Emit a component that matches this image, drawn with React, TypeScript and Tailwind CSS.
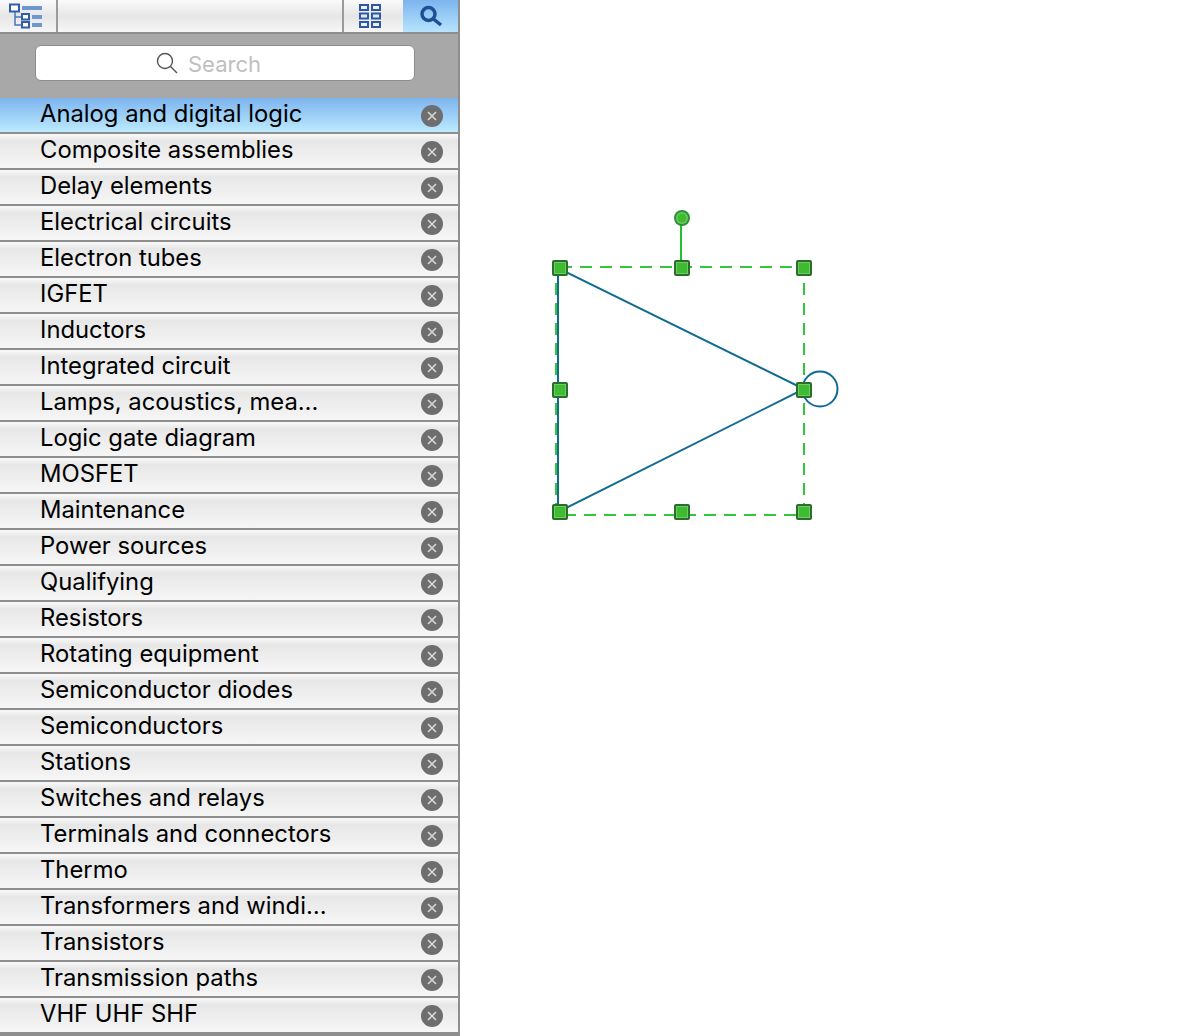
const libraries = [
  "Analog and digital logic",
  "Composite assemblies",
  "Delay elements",
  "Electrical circuits",
  "Electron tubes",
  "IGFET",
  "Inductors",
  "Integrated circuit",
  "Lamps, acoustics, mea…",
  "Logic gate diagram",
  "MOSFET",
  "Maintenance",
  "Power sources",
  "Qualifying",
  "Resistors",
  "Rotating equipment",
  "Semiconductor diodes",
  "Semiconductors",
  "Stations",
  "Switches and relays",
  "Terminals and connectors",
  "Thermo",
  "Transformers and windi…",
  "Transistors",
  "Transmission paths",
  "VHF UHF SHF",
];

function TreeIcon() {
  return (
    <svg width="34" height="26" viewBox="0 0 34 26" fill="none">
      <path d="M6 9V22H13M6 14H13" stroke="#4a76b8" strokeWidth="1.5" />
      <rect x="1" y="1.5" width="9" height="7" fill="#fff" stroke="#2f5fa8" strokeWidth="2" />
      <rect x="13" y="11" width="7" height="5.5" fill="#fff" stroke="#2f5fa8" strokeWidth="2" />
      <rect x="13" y="19" width="7" height="5.5" fill="#fff" stroke="#2f5fa8" strokeWidth="2" />
      <rect x="13" y="3" width="20" height="4" fill="#6f96cf" />
      <rect x="23" y="12" width="10" height="4" fill="#6f96cf" />
      <rect x="23" y="20" width="10" height="4" fill="#6f96cf" />
    </svg>
  );
}

function GridIcon() {
  return (
    <svg width="22" height="24" viewBox="0 0 22 24" fill="none" stroke="#2f58a4" strokeWidth="2">
      <rect x="1" y="1" width="8" height="5" />
      <rect x="13" y="1" width="8" height="5" />
      <rect x="1" y="9.5" width="8" height="5" />
      <rect x="13" y="9.5" width="8" height="5" />
      <rect x="1" y="18" width="8" height="5" />
      <rect x="13" y="18" width="8" height="5" />
    </svg>
  );
}

function MagnifierIcon() {
  return (
    <svg width="24" height="22" viewBox="0 0 24 22" fill="none">
      <circle cx="9.5" cy="9" r="6.5" stroke="#1c4f94" strokeWidth="3.5" />
      <path d="M14.5 14L22 20" stroke="#1c4f94" strokeWidth="3.5" />
    </svg>
  );
}

function SearchGlyph() {
  return (
    <svg width="22" height="22" viewBox="0 0 22 22" fill="none" stroke="#555" strokeWidth="1.4">
      <circle cx="9" cy="9" r="7.5" />
      <path d="M14.5 14.5L21 21" />
    </svg>
  );
}

function RemoveIcon() {
  return (
    <svg width="22" height="22" viewBox="0 0 22 22" fill="none">
      <circle cx="11" cy="11" r="11" fill="#6e6e6e" />
      <path d="M7 7L15 15M15 7L7 15" stroke="#d8d8d8" strokeWidth="1.6" />
    </svg>
  );
}

function Handle({ x, y }: { x: number; y: number }) {
  return (
    <g>
      <rect x={x - 8} y={y - 8} width="16" height="16" rx="2" fill="#2b6e2c" />
      <rect x={x - 6} y={y - 6} width="12" height="12" fill="#6fcb66" />
      <rect x={x - 5} y={y - 5} width="10" height="10" fill="#3fbb32" />
    </g>
  );
}

function Diagram() {
  return (
    <svg width="320" height="340" viewBox="530 200 320 340" fill="none" className="absolute left-[70px] top-[200px]">
      <path d="M560 267H804V515H556V267" stroke="#33c63c" strokeWidth="2" strokeDasharray="12 8" />
      <path d="M681 218V267" stroke="#22c02c" strokeWidth="2" />
      <circle cx="820" cy="389" r="17.5" stroke="#0f6a94" strokeWidth="2" />
      <path d="M558 268V512L804 389Z" stroke="#0f6a94" strokeWidth="2" />
      <circle cx="682" cy="218" r="8" fill="#2f8f35" />
      <circle cx="682" cy="218" r="6" fill="#6fcb66" />
      <circle cx="682" cy="218" r="4.5" fill="#3fbb32" />
      <Handle x={560} y={268} />
      <Handle x={682} y={268} />
      <Handle x={804} y={268} />
      <Handle x={560} y={390} />
      <Handle x={804} y={390} />
      <Handle x={560} y={512} />
      <Handle x={682} y={512} />
      <Handle x={804} y={512} />
    </svg>
  );
}

export default function App() {
  return (
    <div className="flex h-[1036px] w-[1184px] overflow-hidden bg-white font-['Inter','Liberation_Sans',sans-serif] text-black">
      <aside className="flex w-[460px] shrink-0 flex-col border-r-2 border-[#8e8e8e] bg-[#8e8e8e]">
        <div className="flex h-[34px] shrink-0 border-b-2 border-[#8e8e8e] bg-gradient-to-b from-[#fafafa] via-[#e6e6e6] to-[#f6f6f6]">
          <div className="flex w-[58px] items-center border-r-2 border-[#9a9a9a] pl-[9px]">
            <TreeIcon />
          </div>
          <div className="flex-1" />
          <div className="flex w-[61px] items-center border-l-2 border-[#9a9a9a] pl-[15px]">
            <GridIcon />
          </div>
          <div className="flex w-[55px] items-center justify-center bg-gradient-to-b from-[#7db4ee] to-[#b7e4fd]">
            <MagnifierIcon />
          </div>
        </div>
        <div className="flex h-[64px] shrink-0 items-start bg-[#a8a8a8] pt-[11px] pl-[35px]">
          <div className="flex h-[36px] w-[380px] items-center gap-[10px] rounded-[6px] border border-[#8c8c8c] bg-white pl-[120px]">
            <SearchGlyph />
            <span className="relative top-px text-[22px] leading-none text-[#c0c0c0]">Search</span>
          </div>
        </div>
        {libraries.map((name, i) => (
          <div
            key={name}
            className={`flex h-[34px] shrink-0 items-center justify-between ${i === 0 ? "bg-gradient-to-b from-[#7db4ee] to-[#bceafe]" : "bg-gradient-to-b from-[#fafafa] from-0% via-[#e7e7e7] via-20% to-[#f6f6f6] to-100%"} ${i === libraries.length - 1 ? "mb-[4px]" : "mb-[2px]"}`}
          >
            <span className="-mt-[2px] pl-[40px] text-[23.8px] leading-[30px] whitespace-nowrap">{name}</span>
            <span className="mt-[2px] mr-[15px] flex">
              <RemoveIcon />
            </span>
          </div>
        ))}
      </aside>
      <main className="relative flex-1 bg-white">
        <Diagram />
      </main>
    </div>
  );
}
